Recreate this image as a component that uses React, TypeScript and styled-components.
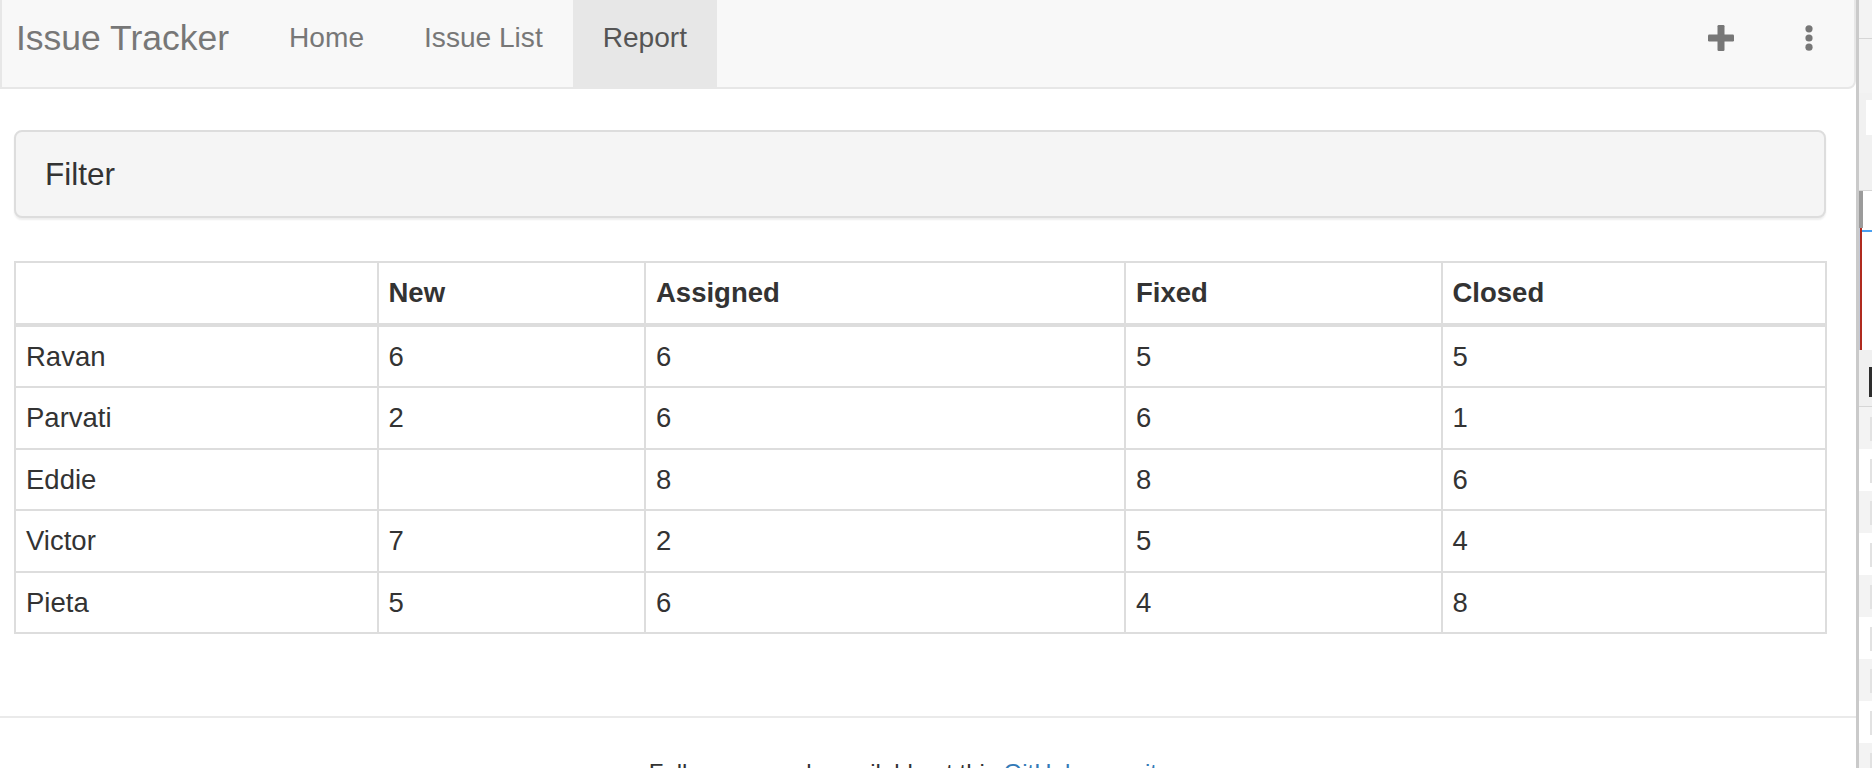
import React from "react";
import styled, { createGlobalStyle } from "styled-components";

const GlobalStyle = createGlobalStyle`
  html, body {
    margin: 0;
    padding: 0;
    background: #ffffff;
    overflow: hidden;
  }
  body {
    font-family: "Liberation Sans", Arial, Helvetica, sans-serif;
    color: #333333;
  }
  * { box-sizing: border-box; }
`;

const Frame = styled.div`
  display: flex;
  width: 1872px;
  height: 768px;
  overflow: hidden;
`;

const Main = styled.div`
  width: 1856px;
  flex: none;
  display: flex;
  flex-direction: column;
`;

const Navbar = styled.nav`
  margin-top: -13px;
  height: 102px;
  flex: none;
  display: flex;
  align-items: stretch;
  background: #f8f8f8;
  border: 2px solid #e7e7e7;
  border-radius: 0 0 8px 0;
`;

const Brand = styled.a`
  display: flex;
  align-items: center;
  padding: 0 30px 0 14px;
  font-size: 35.5px;
  color: #777777;
  text-decoration: none;
  white-space: nowrap;
`;

const NavItem = styled.a<{ $active?: boolean }>`
  display: flex;
  align-items: center;
  padding: 0 30px;
  font-size: 28.1px;
  color: ${(p) => (p.$active ? "#555555" : "#777777")};
  background: ${(p) => (p.$active ? "#e7e7e7" : "transparent")};
  text-decoration: none;
  white-space: nowrap;
`;

const Spacer = styled.div`
  flex: 1;
`;

const RightNav = styled.div`
  display: flex;
  align-items: stretch;
  gap: 11px;
  padding-right: 11px;
`;

const IconLink = styled.a`
  display: flex;
  align-items: center;
  padding: 0 30px;
  color: #777777;
`;

const Content = styled.div`
  padding: 0 30px 0 14px;
  display: flex;
  flex-direction: column;
`;

const Panel = styled.div`
  margin-top: 41px;
  height: 88px;
  display: flex;
  align-items: center;
  padding: 0 29px;
  background: #f5f5f5;
  border: 2px solid #dddddd;
  border-radius: 8px;
  box-shadow: 0 2px 2px rgba(0, 0, 0, 0.07);
`;

const PanelTitle = styled.h3`
  margin: 0;
  font-size: 31.5px;
  font-weight: 400;
  color: #333333;
`;

const Table = styled.table`
  margin-top: 43px;
  width: 1811px;
  table-layout: fixed;
  border-collapse: collapse;
  font-size: 27.5px;
  color: #333333;
`;

const Col = styled.col<{ $w: number }>`
  width: ${(p) => p.$w}px;
`;

const Th = styled.th`
  text-align: left;
  font-weight: 700;
  padding: 10px 10px;
  line-height: 39.5px;
  border: 2px solid #dddddd;
  border-bottom-width: 4px;
`;

const Td = styled.td`
  padding: 10px 10px;
  line-height: 39.5px;
  border: 2px solid #dddddd;
`;

const Footer = styled.footer`
  margin-top: 82px;
  border-top: 2px solid #eaeaea;
  padding: 38px 26px 0 14px;
  text-align: center;
  font-size: 24px;
  line-height: 34px;
  color: #333333;
`;

const FooterLink = styled.a`
  color: #337ab7;
  text-decoration: none;
`;

const Divider = styled.div`
  width: 3px;
  flex: none;
  background: #cacaca;
`;

const Strip = styled.div`
  flex: 1;
  display: flex;
  flex-direction: column;
  background: #ffffff;
`;

const StripBlock = styled.div<{ $h: number; $bg: string }>`
  height: ${(p) => p.$h}px;
  flex: none;
  background: ${(p) => p.$bg};
  display: flex;
  justify-content: flex-end;
`;

const StripLine = styled.div`
  height: 1px;
  flex: none;
  background: #d6d6d6;
`;

const WhiteBox = styled.div`
  margin-top: 7px;
  width: 6px;
  height: 35px;
  background: #ffffff;
`;

const DarkMark = styled.div`
  margin-top: 17px;
  width: 3px;
  height: 30px;
  background: #2e2e2e;
`;

const FaintMark = styled.div`
  margin-top: 10px;
  width: 2px;
  height: 24px;
  background: #e2e2e2;
`;

const SelRow = styled.div`
  height: 37px;
  flex: none;
  display: flex;
`;

const GrayBar = styled.div`
  width: 4px;
  background: #9b9b9b;
`;

const RedArea = styled.div`
  height: 122px;
  flex: none;
  display: flex;
`;

const BlueGray = styled.div`
  width: 1px;
  background: #c3c9d6;
`;

const RedLine = styled.div`
  width: 2px;
  background: #b02a1f;
`;

const BlueLineWrap = styled.div`
  flex: 1;
  padding-top: 2px;
`;

const BlueLine = styled.div`
  height: 2px;
  background: #4a9ff0;
`;

const PlusIcon = () => (
  <svg width="26" height="26" viewBox="0 0 26 26" aria-hidden>
    <rect x="9.5" y="0" width="7" height="26" rx="1.2" fill="#777777" />
    <rect x="0" y="9.5" width="26" height="7" rx="1.2" fill="#777777" />
  </svg>
);

const DotsIcon = () => (
  <svg width="8" height="26" viewBox="0 0 8 26" aria-hidden>
    <circle cx="4" cy="3.8" r="3.6" fill="#777777" />
    <circle cx="4" cy="13" r="3.6" fill="#777777" />
    <circle cx="4" cy="22.2" r="3.6" fill="#777777" />
  </svg>
);

type Row = { name: string; values: (number | null)[] };

const rows: Row[] = [
  { name: "Ravan", values: [6, 6, 5, 5] },
  { name: "Parvati", values: [2, 6, 6, 1] },
  { name: "Eddie", values: [null, 8, 8, 6] },
  { name: "Victor", values: [7, 2, 5, 4] },
  { name: "Pieta", values: [5, 6, 4, 8] },
];

const headers = ["New", "Assigned", "Fixed", "Closed"];
const widths = [362.5, 267.5, 480, 316.5, 384.5];

export default function App() {
  return (
    <>
      <GlobalStyle />
      <Frame>
        <Main>
          <Navbar>
            <Brand>Issue Tracker</Brand>
            <NavItem>Home</NavItem>
            <NavItem>Issue List</NavItem>
            <NavItem $active>Report</NavItem>
            <Spacer />
            <RightNav>
              <IconLink>
                <PlusIcon />
              </IconLink>
              <IconLink>
                <DotsIcon />
              </IconLink>
            </RightNav>
          </Navbar>
          <Content>
            <Panel>
              <PanelTitle>Filter</PanelTitle>
            </Panel>
            <Table>
              <colgroup>
                {widths.map((w, i) => (
                  <Col key={i} $w={w} />
                ))}
              </colgroup>
              <thead>
                <tr>
                  <Th />
                  {headers.map((h) => (
                    <Th key={h}>{h}</Th>
                  ))}
                </tr>
              </thead>
              <tbody>
                {rows.map((r) => (
                  <tr key={r.name}>
                    <Td>{r.name}</Td>
                    {r.values.map((v, i) => (
                      <Td key={i}>{v ?? ""}</Td>
                    ))}
                  </tr>
                ))}
              </tbody>
            </Table>
          </Content>
          <Footer>
            Full source code available at this{" "}
            <FooterLink>GitHub repository</FooterLink>.
          </Footer>
        </Main>
        <Divider />
        <Strip>
          <StripBlock $h={38} $bg="#f3f3f3" />
          <StripLine />
          <StripBlock $h={54} $bg="#f3f3f3" />
          <StripBlock $h={97} $bg="#f1f1f1">
            <WhiteBox />
          </StripBlock>
          <StripLine />
          <SelRow>
            <GrayBar />
          </SelRow>
          <RedArea>
            <BlueGray />
            <RedLine />
            <BlueLineWrap>
              <BlueLine />
            </BlueLineWrap>
          </RedArea>
          <StripBlock $h={56} $bg="#f0f0f0">
            <DarkMark />
          </StripBlock>
          <StripLine />
          {Array.from({ length: 9 }).map((_, i) => (
            <StripBlock key={i} $h={42} $bg={i % 2 === 0 ? "#f3f3f3" : "#ffffff"}>
              <FaintMark />
            </StripBlock>
          ))}
        </Strip>
      </Frame>
    </>
  );
}
